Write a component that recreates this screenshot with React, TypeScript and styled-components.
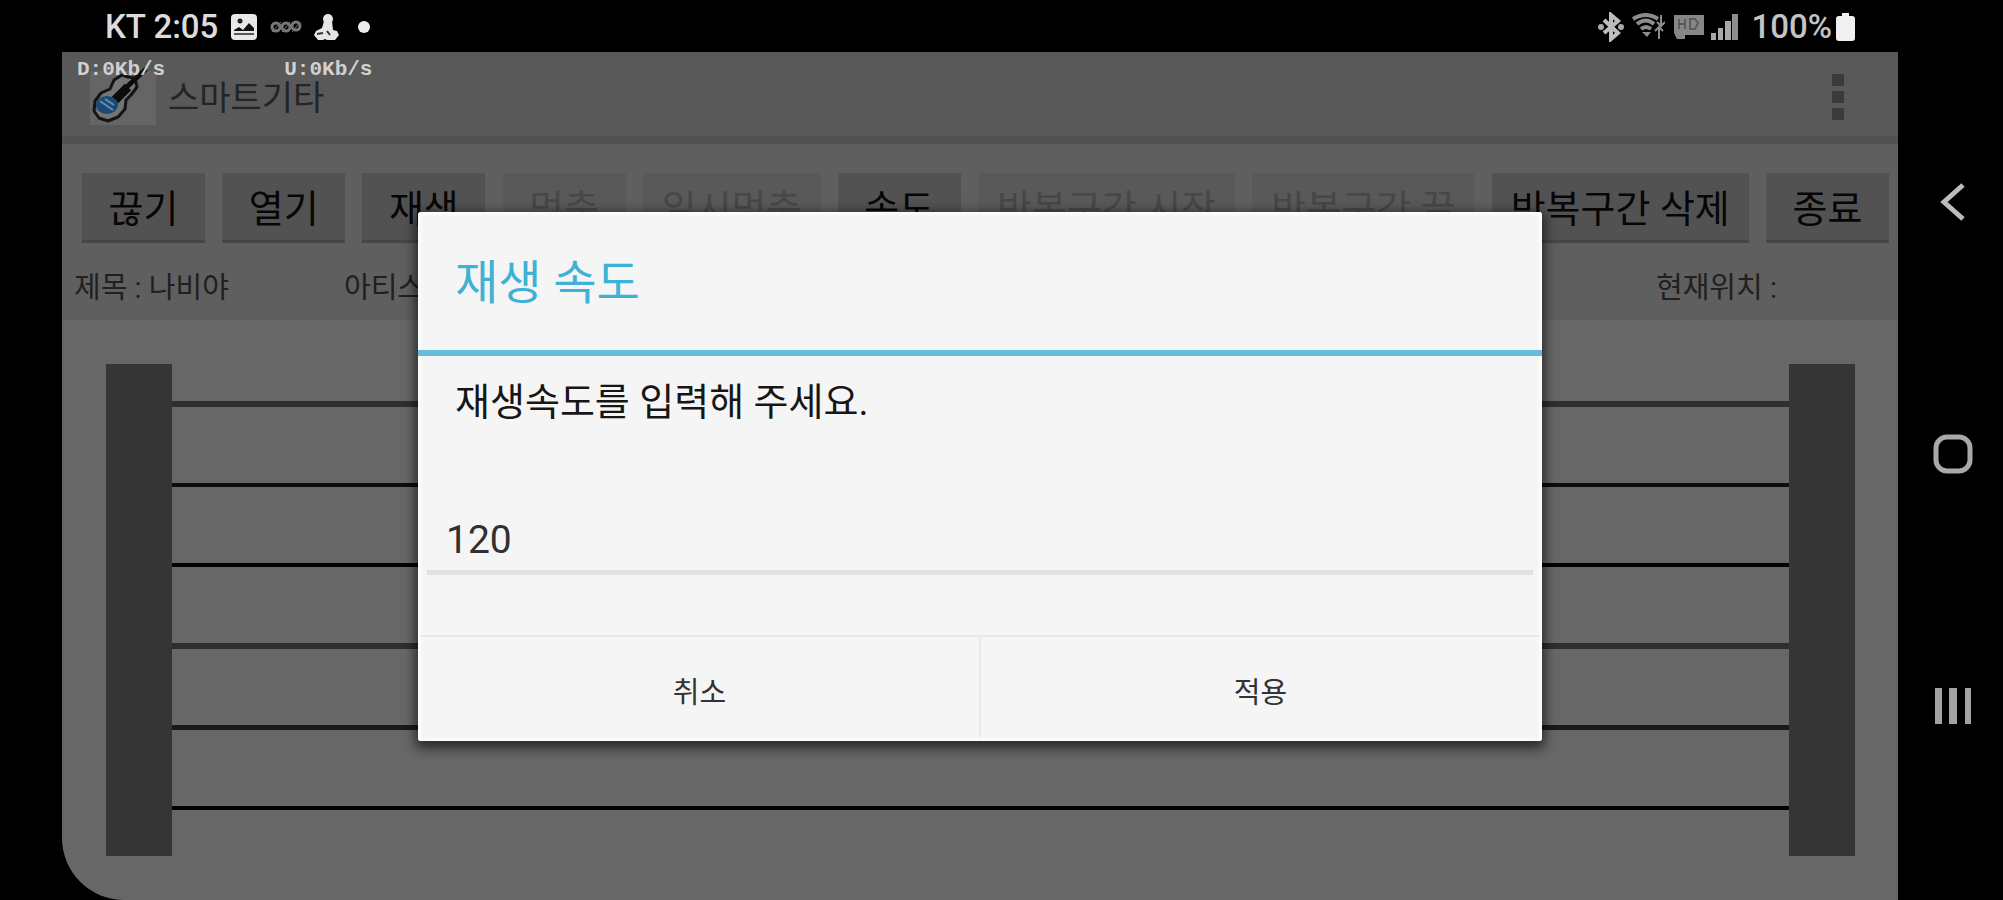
import React from "react";
import styled, { createGlobalStyle } from "styled-components";

const GlobalStyle = createGlobalStyle`
  *, *::before, *::after { box-sizing: border-box; }
  body {
    margin: 0;
    background: #000;
    font-family: Roboto, "Noto Sans CJK KR", sans-serif;
  }
  button, input { font-family: inherit; }
  h1, h2, p { margin: 0; font-weight: 400; }
`;

const Device = styled.div`
  display: flex;
  min-height: 100vh;
  padding-left: 62px;
  background: #000;
  overflow: hidden;
`;

const Screen = styled.div`
  flex: 1;
  min-width: 0;
  display: flex;
  flex-direction: column;
`;

const StatusBar = styled.div`
  height: 52px;
  padding: 2px 43px 0 43px;
  display: flex;
  align-items: center;
  justify-content: space-between;
  color: #dcdcdc;
  font-size: 33px;
  line-height: 40px;
  font-weight: 500;
`;

const StatusGroup = styled.div<{ $gap: number }>`
  display: flex;
  align-items: center;
  gap: ${(p) => p.$gap}px;
`;

const BatteryGroup = styled.div`
  display: flex;
  align-items: center;
  gap: 4px;
  margin-left: 6px;
  color: #c4c4c4;
`;

const AppWindow = styled.main`
  position: relative;
  flex: 1;
  display: flex;
  flex-direction: column;
  background: #676767;
  border-bottom-left-radius: 62px;
  overflow: hidden;
`;

const TrafficMeter = styled.div`
  position: absolute;
  top: 8px;
  left: 15px;
  display: flex;
  gap: 119px;
  color: #d0d0d0;
  font: bold 21px/20px "Liberation Mono", monospace;
`;

const ActionBar = styled.header`
  height: 92px;
  padding: 0 54px 0 28px;
  display: flex;
  align-items: center;
  gap: 10px;
  background: #595959;
  border-bottom: 8px solid #525252;
`;

const AppTitle = styled.h1`
  flex: 1;
  padding-top: 8px;
  color: #242424;
  font-size: 34px;
  line-height: 40px;
`;

const OverflowButton = styled.button`
  display: flex;
  flex-direction: column;
  gap: 5px;
  padding: 6px 0 0;
  border: 0;
  background: none;
`;

const OverflowDot = styled.span`
  width: 12px;
  height: 12px;
  background: #3b3b3b;
`;

const Controls = styled.section`
  background: #5f5f5f;
  padding: 29px 9px 12px 20px;
`;

const Toolbar = styled.div`
  display: flex;
  justify-content: space-between;
`;

const ToolButton = styled.button`
  min-width: 123px;
  height: 70px;
  padding: 4px 19px 0;
  border: 0;
  border-bottom: 3px solid #464646;
  background: #525252;
  color: #060606;
  font-size: 38px;
  line-height: 48px;
  white-space: nowrap;
  &:disabled {
    background: #595959;
    border-color: #505050;
    color: #474747;
  }
`;

const SongInfo = styled.div`
  display: flex;
  margin: 25px 0 0 -8px;
  color: #202020;
  font-size: 29px;
  line-height: 40px;
`;

const InfoCell = styled.span<{ $width?: number }>`
  flex: ${(p) => (p.$width ? `0 0 ${p.$width}px` : "1")};
`;

const Fretboard = styled.section`
  flex: 1;
  display: flex;
  padding: 44px 43px 44px 44px;
`;

const Pillar = styled.div`
  width: 66px;
  background: #353535;
`;

const Strings = styled.div`
  flex: 1;
  display: flex;
  flex-direction: column;
  justify-content: space-between;
  padding: 37px 0 46px;
`;

const GuitarString = styled.div<{ $thick: number; $tone: string }>`
  height: ${(p) => p.$thick}px;
  background: ${(p) => p.$tone};
`;

const Overlay = styled.div`
  position: absolute;
  inset: 0;
  display: flex;
  align-items: center;
  justify-content: center;
`;

const Dialog = styled.form`
  width: 1124px;
  max-width: 92%;
  background: #f5f5f5;
  border-radius: 3px;
  box-shadow: inset 0 0 4px 2px #fff, 0 4px 12px 3px rgba(0, 0, 0, 0.6);
`;

const DialogTitle = styled.h2`
  height: 144px;
  padding: 4px 37px 0;
  display: flex;
  align-items: center;
  border-bottom: 6px solid #65bdd9;
  color: #3fb1d6;
  font-size: 47px;
  line-height: 60px;
`;

const DialogMessage = styled.label`
  display: block;
  padding: 21px 37px 0;
  color: #161616;
  font-size: 38px;
  line-height: 50px;
`;

const SpeedInput = styled.input`
  display: block;
  width: calc(100% - 18px);
  height: 78px;
  margin: 70px 9px 60px;
  padding: 14px 19px 0;
  border: 0;
  border-bottom: 5px solid #e2e2e2;
  background: none;
  outline: 0;
  color: #303030;
  font-size: 39px;
`;

const DialogActions = styled.div`
  display: flex;
  margin: 0 2px;
  border-top: 2px solid #e8e8e8;
`;

const DialogButton = styled.button`
  flex: 1;
  height: 100px;
  margin-bottom: 4px;
  padding: 6px 0 0;
  border: 0;
  background: none;
  color: #333;
  font-size: 29px;
  & + & {
    border-left: 2px solid #e8e8e8;
  }
`;

const NavBar = styled.nav`
  width: 105px;
  padding: 76px 0 68px 5px;
  display: flex;
  flex-direction: column;
`;

const NavButton = styled.button`
  flex: 1;
  display: flex;
  align-items: center;
  justify-content: center;
  padding: 0;
  border: 0;
  background: none;
`;

const PictureIcon = () => (
  <svg width="28" height="28" viewBox="0 0 28 28">
    <rect x="1" y="1" width="26" height="26" rx="4" fill="#e8e8e8" />
    <circle cx="10" cy="8" r="2.5" fill="#222" />
    <path d="M4 17l5-3 4 3 6-7 5 5v3H4z" fill="#111" />
    <path d="M4 21h20" stroke="#555" strokeWidth="2" />
  </svg>
);

const RingsIcon = () => (
  <svg width="32" height="16" viewBox="0 0 32 16" fill="none" stroke="#777" strokeWidth="3">
    <circle cx="6" cy="8" r="4" />
    <circle cx="16" cy="8" r="4" />
    <circle cx="26" cy="7" r="4" />
    <path d="M2 13l9-10M12 13l8-10M22 13l8-10" strokeWidth="1" />
  </svg>
);

const FigureIcon = () => (
  <svg width="26" height="28" viewBox="0 0 26 28" fill="#e6e6e6">
    <circle cx="14" cy="6" r="5" />
    <path d="M10 8h8l1 9 4 1 2 4-4 5h-8l-2-1-2 1H4l-4-5 2-4 6-3z" />
    <path d="M13 18l3 4M3 21l6-1" stroke="#333" strokeWidth="2" />
  </svg>
);

const DotIcon = () => (
  <svg width="28" height="14" viewBox="0 0 28 14">
    <circle cx="12" cy="7" r="6" fill="#ececec" />
  </svg>
);

const BluetoothIcon = () => (
  <svg width="28" height="30" viewBox="0 0 28 30" fill="none" stroke="#bdbdbd" strokeWidth="4">
    <path d="M7 8l14 13-7 6V3l7 6L7 21" />
    <circle cx="4" cy="15" r="3" fill="#aaa" stroke="none" />
    <circle cx="24" cy="15" r="3" fill="#aaa" stroke="none" />
  </svg>
);

const WifiIcon = () => (
  <svg width="34" height="28" viewBox="0 0 34 28" fill="none" stroke="#8c8c8c" strokeWidth="4">
    <path d="M2 6Q15-2 27 6M6 11Q15 4 23 11M10 16Q15 12 20 16" />
    <path d="M11 19l5 5 4-5z" fill="#8c8c8c" stroke="none" />
    <path d="M30 2v10M26 9l4 4 4-4M28 26V15M24 18l4-4 4 4" strokeWidth="2" />
  </svg>
);

const VolteIcon = () => (
  <svg width="32" height="26" viewBox="0 0 32 26">
    <path d="M1 1h30v20H12v4H4l-3-6z" fill="#868686" />
    <path d="M6 5v10M6 10h6M12 5v10M17 5h5l3 4-3 6h-5z" stroke="#5c5c5c" strokeWidth="2" fill="none" />
  </svg>
);

const SignalIcon = () => (
  <svg width="28" height="26" viewBox="0 0 28 26" fill="#a8a8a8">
    <rect x="0" y="19" width="5" height="7" />
    <rect x="7" y="14" width="5" height="12" />
    <rect x="14" y="7" width="6" height="19" />
    <rect x="21" y="0" width="6" height="26" fill="#8e8e8e" />
  </svg>
);

const BatteryIcon = () => (
  <svg width="19" height="28" viewBox="0 0 19 28">
    <path d="M6 0h7v3h3q3 0 3 3v19q0 3-3 3H3q-3 0-3-3V6q0-3 3-3h3z" fill="#f0f0f0" />
  </svg>
);

const GuitarIcon = () => (
  <svg width="68" height="62" viewBox="0 0 68 62">
    <rect x="0" y="8" width="66" height="54" fill="#656565" />
    <path
      d="M20 26l4-9 8-5 6 2 7 1 2 9-6 8-5 5-1 9-7 8-10 4-9-3-5-7 1-10 6-8z"
      fill="#747474"
      stroke="#141414"
      strokeWidth="3"
      strokeLinejoin="round"
    />
    <path d="M25 35L56 6" stroke="#0c0c0c" strokeWidth="5" />
    <path d="M25 37L38 24" stroke="#0c0c0c" strokeWidth="9" />
    <ellipse cx="17" cy="42" rx="11" ry="9" fill="#1d4a72" />
    <path d="M10 38l13 9M15 36l9 6" stroke="#5d8fb8" strokeWidth="2" />
  </svg>
);

const BackIcon = () => (
  <svg width="26" height="40" viewBox="0 0 26 40" fill="none" stroke="#bcbcbc" strokeWidth="5">
    <path d="M23 3L4 20l19 17" />
  </svg>
);

const HomeIcon = () => (
  <svg width="40" height="40" viewBox="0 0 40 40" fill="none" stroke="#a9a9a9" strokeWidth="5">
    <rect x="3" y="3" width="34" height="34" rx="11" />
  </svg>
);

const RecentsIcon = () => (
  <svg width="38" height="36" viewBox="0 0 38 36" fill="#a3a3a3">
    <rect x="1" y="0" width="7" height="36" />
    <rect x="15" y="0" width="8" height="36" />
    <rect x="31" y="0" width="6" height="36" />
  </svg>
);

const tools = [
  { label: "끊기" },
  { label: "열기" },
  { label: "재생" },
  { label: "멈춤", disabled: true },
  { label: "일시멈춤", disabled: true },
  { label: "속도" },
  { label: "반복구간 시작", disabled: true },
  { label: "반복구간 끝", disabled: true },
  { label: "반복구간 삭제" },
  { label: "종료" },
];

const strings = [
  { thick: 6, tone: "#2f2f2f" },
  { thick: 4, tone: "#0c0c0c" },
  { thick: 4, tone: "#000" },
  { thick: 6, tone: "#2f2f2f" },
  { thick: 5, tone: "#191919" },
  { thick: 4, tone: "#000" },
];

export default function App() {
  return (
    <>
      <GlobalStyle />
      <Device>
        <Screen>
          <StatusBar>
            <StatusGroup $gap={12}>
              <span>KT 2:05</span>
              <PictureIcon />
              <RingsIcon />
              <FigureIcon />
              <DotIcon />
            </StatusGroup>
            <StatusGroup $gap={6}>
              <BluetoothIcon />
              <StatusGroup $gap={8}>
                <WifiIcon />
                <VolteIcon />
              </StatusGroup>
              <SignalIcon />
              <BatteryGroup>
                <span>100%</span>
                <BatteryIcon />
              </BatteryGroup>
            </StatusGroup>
          </StatusBar>
          <AppWindow>
            <ActionBar>
              <GuitarIcon />
              <AppTitle>스마트기타</AppTitle>
              <OverflowButton aria-label="더보기">
                <OverflowDot />
                <OverflowDot />
                <OverflowDot />
              </OverflowButton>
            </ActionBar>
            <Controls>
              <Toolbar>
                {tools.map((t) => (
                  <ToolButton key={t.label} disabled={t.disabled}>
                    {t.label}
                  </ToolButton>
                ))}
              </Toolbar>
              <SongInfo>
                <InfoCell $width={270}>제목 : 나비야</InfoCell>
                <InfoCell>아티스트 :</InfoCell>
                <InfoCell $width={233}>현재위치 :</InfoCell>
              </SongInfo>
            </Controls>
            <Fretboard>
              <Pillar />
              <Strings>
                {strings.map((s, i) => (
                  <GuitarString key={i} $thick={s.thick} $tone={s.tone} />
                ))}
              </Strings>
              <Pillar />
            </Fretboard>
            <TrafficMeter>
              <span>D:0Kb/s</span>
              <span>U:0Kb/s</span>
            </TrafficMeter>
            <Overlay>
              <Dialog role="dialog" aria-labelledby="speed-title" onSubmit={(e) => e.preventDefault()}>
                <DialogTitle id="speed-title">재생 속도</DialogTitle>
                <DialogMessage htmlFor="speed">재생속도를 입력해 주세요.</DialogMessage>
                <SpeedInput id="speed" inputMode="numeric" defaultValue="120" />
                <DialogActions>
                  <DialogButton type="button">취소</DialogButton>
                  <DialogButton type="submit">적용</DialogButton>
                </DialogActions>
              </Dialog>
            </Overlay>
          </AppWindow>
        </Screen>
        <NavBar>
          <NavButton aria-label="뒤로">
            <BackIcon />
          </NavButton>
          <NavButton aria-label="홈">
            <HomeIcon />
          </NavButton>
          <NavButton aria-label="최근 앱">
            <RecentsIcon />
          </NavButton>
        </NavBar>
      </Device>
    </>
  );
}
